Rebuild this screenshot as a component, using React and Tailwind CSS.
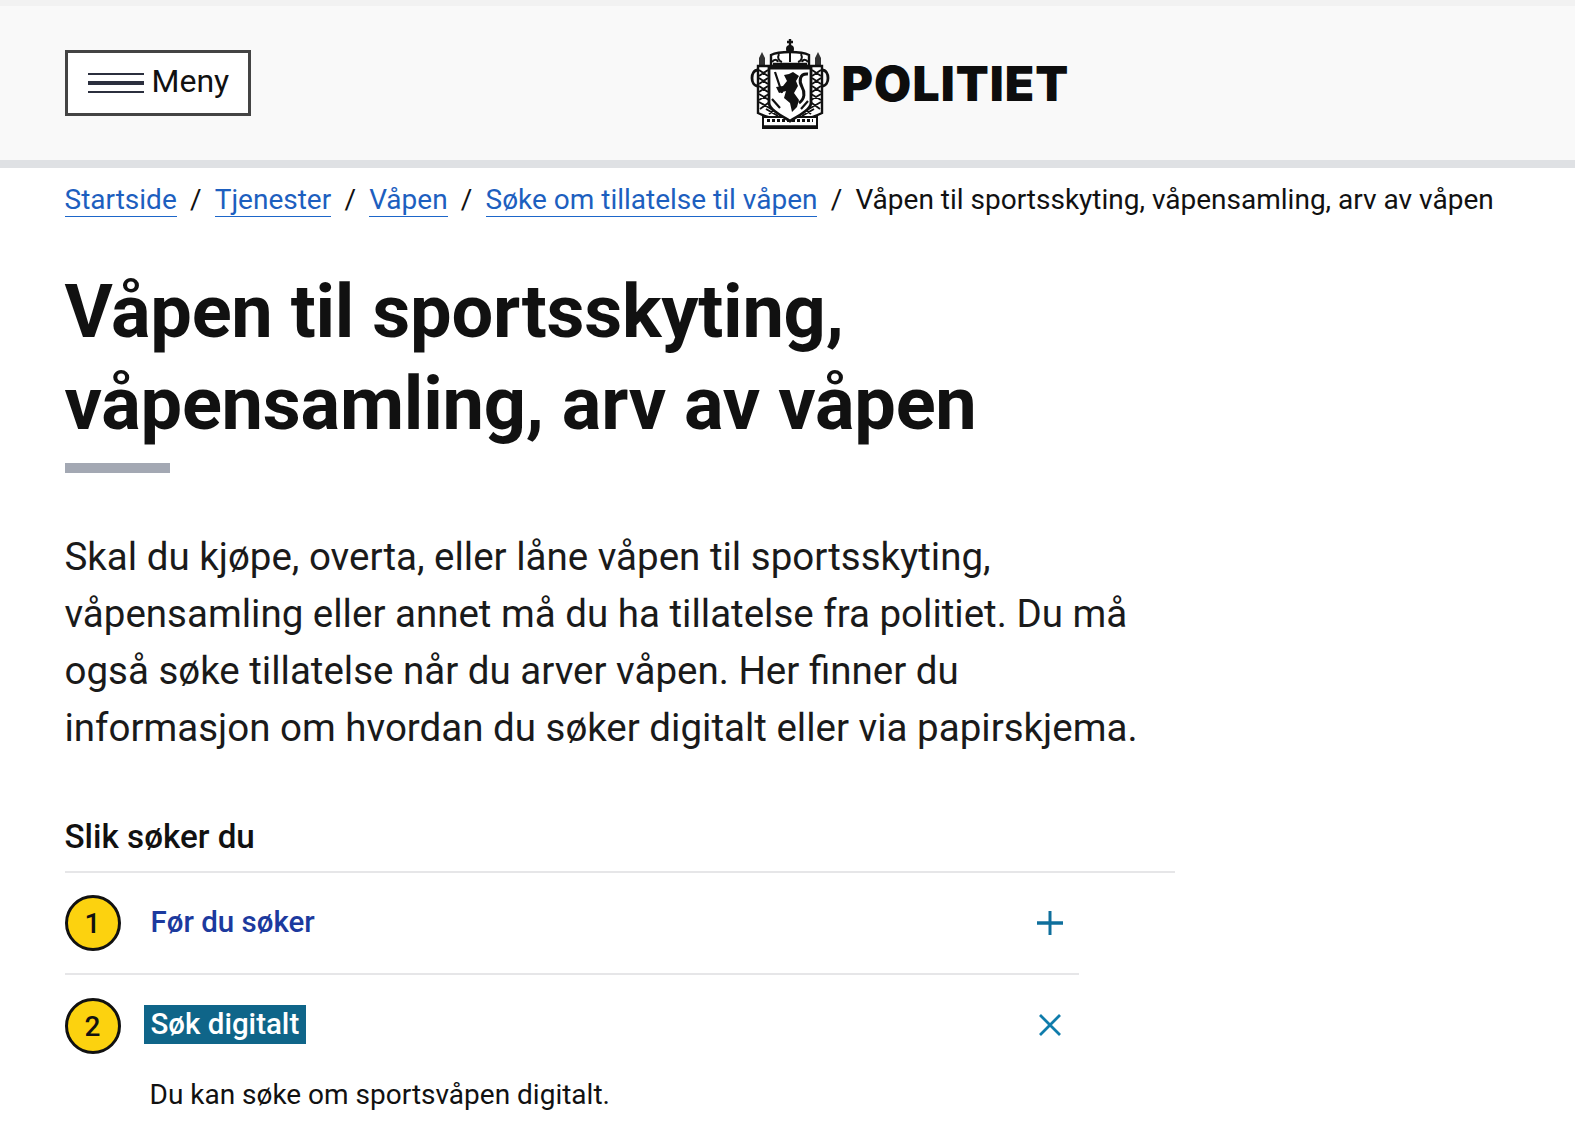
function Crest() {
  return (
    <svg width="80" height="90" viewBox="0 0 80 90" fill="none" stroke="#111" className="shrink-0">
      {/* cross and crown */}
      <path d="M40 0v8M37 3h6" strokeWidth="2.4" />
      <circle cx="40" cy="10" r="4" fill="#111" stroke="none" />
      <path d="M21 16c6-3 13-3 19-3s13 0 19 3v11H21z" strokeWidth="2.4" fill="#fff" />
      <path d="M29 15c-2 4 0 7 3 8M40 14v9M51 15c2 4 0 7-3 8M22 23c2-3 5-3 6 0M52 23c1-3 4-3 6 0" strokeWidth="2" />
      <path d="M23 25h34" strokeWidth="2.5" />
      {/* side pillars */}
      <path d="M12 13l3 6v8H9v-8zM68 13l3 6v8h-6v-8z" fill="#333" stroke="none" />
      <path d="M8 27h64v47c-6 3-12 5-17 5H25c-5 0-11-2-17-5z" strokeWidth="2.4" fill="#fff" />
      {/* mantle pattern */}
      <path d="M9 31l9 6M18 31l-9 6M9 39l9 6M18 39l-9 6M9 47l9 6M18 47l-9 6M9 55l10 6M19 55l-10 6M9 63l14 8M21 62L10 70M16 70l12 7M28 68l-9 7M62 31l9 6M71 31l-9 6M62 39l9 6M71 39l-9 6M62 47l9 6M71 47l-9 6M61 55l10 6M71 55l-10 6M57 71l14-8M59 62l11 8M52 77l12-7M52 68l9 7" strokeWidth="1.9" />
      <path d="M8 31C0 31 0 47 8 47M72 31c8 0 8 16 0 16" strokeWidth="2.8" />
      {/* base */}
      <path d="M13 78h54v11H13z" strokeWidth="2" fill="#fff" />
      <path d="M17 81.5h46" strokeWidth="3" strokeDasharray="3 2" />
      <path d="M13 88h54" strokeWidth="3.5" />
      {/* shield */}
      <path d="M19 29h42v35c0 6-11 12-21 18-10-6-21-12-21-18z" strokeWidth="2.8" fill="#fff" />
      {/* lion */}
      <path d="M43 33l6 4-3 5 2 5-4 7 5 7-2 7-5 5-2-9-6-5 2-7-7 2-3-6 7-1 4-5-3-6 5-1z" fill="#111" stroke="none" />
      <path d="M25 33l7 21M22 60l8 9M58 62l-7 8" strokeWidth="2.2" />
      <path d="M58 35c-9-1-9 8-6 13s3 12-3 16" strokeWidth="3" />
    </svg>
  )
}

function Slash() {
  return <span className="mx-[13.2px]">/</span>
}

function Crumb({ children }) {
  return <a className="text-[#1d5fbf] border-b border-[#1d66c9]">{children}</a>
}

export default function App() {
  return (
    <div className="bg-white text-[#111] font-['Roboto',sans-serif] min-h-[1142px] overflow-hidden">
      {/* Header */}
      <header className="h-[168px] bg-[#f9f9f9] border-t-[6px] border-t-[#f2f2f2] border-b-[8px] border-b-[#dfe1e4] pl-[64.5px] flex items-center">
        <button className="w-[186px] h-[66px] border-[3px] border-[#444] bg-white flex items-center pl-[20px]">
          <span className="flex flex-col gap-[6px] w-[56px] mr-[8px]">
            <span className="h-[2px] bg-[#2b2f3e]" />
            <span className="h-[4px] bg-[#2b2f3e]" />
            <span className="h-[2px] bg-[#2b2f3e]" />
          </span>
          <span className="text-[32px] leading-none -mt-[4px]">Meny</span>
        </button>
        <div className="ml-[499px] flex items-center mt-[2px]">
          <Crest />
          <span className="ml-[12px] font-['Inter',sans-serif] font-black text-[48px] leading-none tracking-[1.1px] text-[#0d0d0d]">POLITIET</span>
        </div>
      </header>

      <main className="pl-[64.5px]">
        {/* Breadcrumb */}
        <nav className="mt-[14px] text-[28px] leading-[36px] whitespace-nowrap">
          <Crumb>Startside</Crumb>
          <Slash />
          <Crumb>Tjenester</Crumb>
          <Slash />
          <Crumb>Våpen</Crumb>
          <Slash />
          <Crumb>Søke om tillatelse til våpen</Crumb>
          <Slash />
          <span>Våpen til sportsskyting, våpensamling, arv av våpen</span>
        </nav>

        <h1 className="mt-[48px] text-[74px] leading-[92px] font-bold tracking-[-0.25px] text-[#111]">
          Våpen til sportsskyting,
          <br />
          våpensamling, arv av våpen
        </h1>
        <div className="mt-[13px] w-[105px] h-[10px] bg-[#a3a8b3]" />

        <p className="mt-[55px] text-[38.5px] leading-[57px] text-[#1a1a1a]">
          Skal du kjøpe, overta, eller låne våpen til sportsskyting,
          <br />
          våpensamling eller annet må du ha tillatelse fra politiet. Du må
          <br />
          også søke tillatelse når du arver våpen. Her finner du
          <br />
          informasjon om hvordan du søker digitalt eller via papirskjema.
        </p>

        <h2 className="mt-[60px] text-[33.2px] leading-[42px] font-medium">Slik søker du</h2>

        {/* Steps */}
        <div className="mt-[13px] w-[1110px] border-t-2 border-[#e6e6e8]">
          <div className="w-[1014px] h-[102px] border-b-2 border-[#e6e6e8] flex items-center">
            <span className="w-[56px] h-[56px] rounded-full border-[3px] border-[#111] bg-[#fcd20f] flex items-center justify-center text-[28px] font-medium pt-[2px]">1</span>
            <span className="ml-[30px] text-[29.5px] font-medium text-[#1c3a9e] -mt-[2px]">Før du søker</span>
            <svg width="28" height="28" viewBox="0 0 28 28" className="ml-auto mr-[15px]" stroke="#0f6f9c" fill="none">
              <path d="M14 2v24" strokeWidth="3" />
              <path d="M1 14h26" strokeWidth="3.5" />
            </svg>
          </div>
          <div className="w-[1014px] h-[102px] flex items-center">
            <span className="w-[56px] h-[56px] rounded-full border-[3px] border-[#111] bg-[#fcd20f] flex items-center justify-center text-[28px] font-medium pt-[2px]">2</span>
            <span className="ml-[23px] px-[7px] h-[39px] flex items-center text-[29.5px] font-medium text-white bg-[#0f6589] -mt-[3px]">Søk digitalt</span>
            <svg width="28" height="28" viewBox="0 0 28 28" className="ml-auto mr-[15px] -mt-[2px]" stroke="#0f7cab" strokeWidth="2.8" fill="none">
              <path d="M4 4l20 20M24 4L4 24" />
            </svg>
          </div>
        </div>
        <p className="ml-[85px] text-[28px] leading-[36px]">Du kan søke om sportsvåpen digitalt.</p>
      </main>
    </div>
  )
}
